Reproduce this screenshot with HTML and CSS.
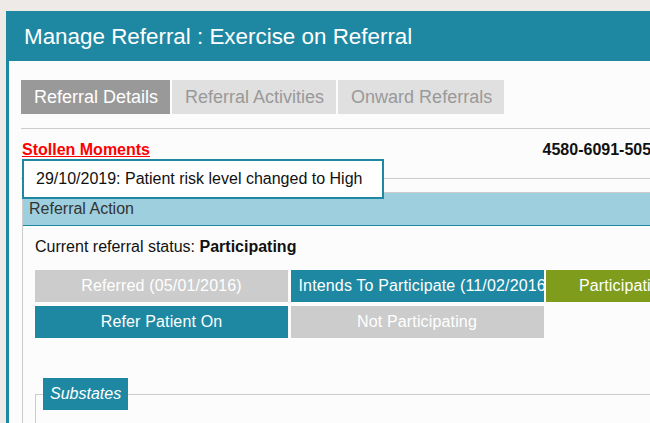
FILE: index.html
```html
<!DOCTYPE html>
<html lang="en">
<head>
<meta charset="utf-8">
<title>Manage Referral</title>
<link rel="stylesheet" href="styles.css">
</head>
<body>
<div class="page">
  <div class="header"><h1 class="title">Manage Referral : Exercise on Referral</h1></div>
  <div class="content">
    <div class="tabs">
      <div class="tab tab-active">Referral Details</div>
      <div class="tab">Referral Activities</div>
      <div class="tab">Onward Referrals</div>
    </div>
    <div class="patient">
      <a class="patient-name" href="#">Stollen Moments</a>
      <span class="patient-id">4580-6091-5056</span>
      <div class="tooltip">29/10/2019: Patient risk level changed to High</div>
    </div>
    <div class="panel">
      <div class="panel-head">Referral Action</div>
      <div class="panel-body">
        <p class="status">Current referral status: <b>Participating</b></p>
        <div class="actions">
          <div class="btn btn-grey">Referred (05/01/2016)</div>
          <div class="btn btn-teal">Intends To Participate (11/02/2016)</div>
          <div class="btn btn-olive">Participating (01/03/2016)</div>
          <div class="btn btn-teal">Refer Patient On</div>
          <div class="btn btn-grey">Not Participating</div>
        </div>
        <fieldset class="substates">
          <legend class="legend">Substates</legend>
          <div class="substates-body"></div>
        </fieldset>
      </div>
    </div>
  </div>
</div>
</body>
</html>
```
FILE: styles.css
```css
html, body {
  margin: 0;
  padding: 0;
}
body {
  background: #eeeae7;
  font-family: "Liberation Sans", Arial, sans-serif;
  font-size: 16px;
  color: #111;
  overflow: hidden;
  width: 650px;
  height: 423px;
}
.page {
  margin: 11px 0 0 6px;
  width: 900px;
  height: 600px;
  background: #fcfcfc;
  border-left: 3px solid #1e88a3;
}
.header {
  background: #1e88a3;
  height: 50px;
  margin-left: -3px;
  padding-left: 18px;
  display: flex;
  align-items: center;
}
.title {
  margin: 0;
  padding-top: 1px;
  font-weight: normal;
  font-size: 22.4px;
  color: #fff;
}
.content {
  padding: 19px 0 0 12px;
}
.tabs {
  display: flex;
  gap: 2px;
  padding-bottom: 14px;
  border-bottom: 1px solid #cccccc;
  width: 760px;
}
.tab {
  height: 34px;
  line-height: 34px;
  padding: 0 12px 0 13px;
  font-size: 18px;
  background: #e0e0e0;
  color: #999999;
}
.tab-active {
  background: #999999;
  color: #fff;
}
.patient {
  position: relative;
  display: flex;
  justify-content: space-between;
  width: 638px;
  padding: 12px 0 19px 1px;
  line-height: 18px;
  border-bottom: 1px solid #cccccc;
  font-weight: bold;
}
.patient-name {
  color: #ff0000;
  text-decoration: underline;
}
.patient-id {
  color: #111;
}
.tooltip {
  position: absolute;
  left: 1px;
  top: 30px;
  box-sizing: border-box;
  width: 362px;
  height: 40px;
  padding-left: 12px;
  line-height: 36px;
  background: #fff;
  border: 2px solid #1e88a3;
  font-weight: normal;
  color: #111;
  z-index: 2;
}
.panel {
  margin: 13px 0 0 1px;
  width: 820px;
  height: 300px;
  border: 1px solid #cccccc;
  background: #fcfcfc;
}
.panel-head {
  height: 32px;
  line-height: 32px;
  padding-left: 6px;
  background: #9ecfde;
  border-bottom: 1px solid #1e88a3;
  color: #333;
}
.panel-body {
  padding: 12px 0 0 12px;
}
.status {
  margin: 0;
  line-height: 18px;
}
.actions {
  margin-top: 14px;
  display: grid;
  grid-template-columns: 253px 253px 253px;
  column-gap: 2.5px;
  row-gap: 4px;
}
.btn {
  height: 32px;
  line-height: 32px;
  padding: 0 8px;
  text-align: center;
  color: #fff;
  white-space: nowrap;
  overflow: hidden;
  letter-spacing: 0.15px;
}
.btn-grey { background: #cccccc; }
.btn-teal { background: #1e88a3; }
.btn-olive { background: #7f9c1c; }
.substates {
  margin: 40px 0 0 0;
  padding: 0 0 0 7px;
  border: 1px solid #cccccc;
  width: 760px;
  min-width: 0;
}
.legend {
  padding: 0 7px;
  height: 32px;
  line-height: 32px;
  background: #1e88a3;
  color: #fff;
  font-style: italic;
}
.substates-body {
  height: 60px;
}
```
